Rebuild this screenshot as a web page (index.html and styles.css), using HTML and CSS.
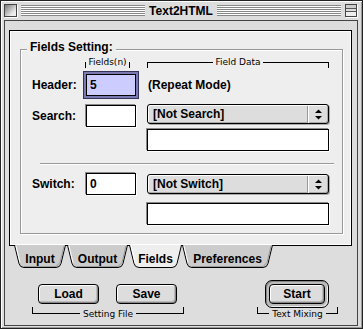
FILE: index.html
```html
<!DOCTYPE html>
<html lang="en">

<head>
  <meta charset="UTF-8">
  <title>Text2HTML</title>
  <link rel="stylesheet" href="styles.css">
</head>

<body>
  <div class="window">
    <div class="titlebar">
      <span class="closebox"></span>
      <span class="stripes"></span>
      <span class="title">Text2HTML</span>
      <span class="stripes"></span>
      <span class="shadebox"></span>
    </div>

    <div class="frame">
      <div class="panel">
        <div class="group">
          <div class="group-title">Fields Setting:</div>

          <div class="captions">
            <span class="cap cap-fields"><span>Fields(n)</span></span>
            <span class="cap cap-data"><span>Field Data</span></span>
          </div>

          <div class="row">
            <label class="lbl" for="header">Header:</label>
            <input class="field focused" id="header" type="text" value="5">
            <span class="note">(Repeat Mode)</span>
          </div>

          <div class="row row-search">
            <label class="lbl" for="search">Search:</label>
            <input class="field" id="search" type="text" value="">
            <div class="data">
              <div class="popup popup-first">
                <span class="popup-text">[Not Search]</span>
                <span class="popup-arrows">
                  <svg width="7" height="11" viewBox="0 0 7 11"><polygon points="0,4 3.5,0.5 7,4" /><polygon points="0,7 3.5,10.5 7,7" /></svg>
                </span>
              </div>
              <div class="wide-field wide-near"></div>
            </div>
          </div>

          <div class="sep"></div>

          <div class="row row-switch">
            <label class="lbl" for="switch">Switch:</label>
            <input class="field" id="switch" type="text" value="0">
            <div class="data">
              <div class="popup popup-second">
                <span class="popup-text">[Not Switch]</span>
                <span class="popup-arrows">
                  <svg width="7" height="11" viewBox="0 0 7 11"><polygon points="0,4 3.5,0.5 7,4" /><polygon points="0,7 3.5,10.5 7,7" /></svg>
                </span>
              </div>
              <div class="wide-field wide-far"></div>
            </div>
          </div>
        </div>
      </div>

      <div class="tabs">
        <svg class="tab" width="52" height="23" viewBox="0 0 52 23">
          <path class="tab-shape" d="M0.5,0 L5,18.5 Q6,22.5 10,22.5 H42 Q46,22.5 47,18.5 L51.5,0" />
          <path class="tab-hi" d="M2,1 L6,17.5" />
          <path class="tab-lo" d="M10,21.5 H42 L46,17.5 L50,1" />
          <text x="26" y="18">Input</text>
        </svg>
        <svg class="tab tab-gap" width="61" height="23" viewBox="0 0 61 23">
          <path class="tab-shape" d="M0.5,0 L5,18.5 Q6,22.5 10,22.5 H51 Q55,22.5 56,18.5 L60.5,0" />
          <path class="tab-hi" d="M2,1 L6,17.5" />
          <path class="tab-lo" d="M10,21.5 H51 L55,17.5 L59,1" />
          <text x="30.5" y="18">Output</text>
        </svg>
        <svg class="tab tab-gap selected" width="53" height="23" viewBox="0 0 53 23">
          <path class="tab-shape" d="M0.5,0 L5,18.5 Q6,22.5 10,22.5 H43 Q47,22.5 48,18.5 L52.5,0" />
          <path class="tab-hi" d="M2,0 L6,17.5" />
          <text x="26.5" y="18">Fields</text>
        </svg>
        <svg class="tab" width="91" height="23" viewBox="0 0 91 23">
          <path class="tab-shape" d="M0.5,0 L5,18.5 Q6,22.5 10,22.5 H81 Q85,22.5 86,18.5 L90.5,0" />
          <path class="tab-hi" d="M2,1 L6,17.5" />
          <path class="tab-lo" d="M10,21.5 H81 L85,17.5 L89,1" />
          <text x="45.5" y="18">Preferences</text>
        </svg>
      </div>

      <div class="bottom">
        <div class="set-group">
          <div class="buttons">
            <button class="btn" type="button">Load</button>
            <button class="btn" type="button">Save</button>
          </div>
          <div class="bracket"><span>Setting File</span></div>
        </div>

        <div class="mix-group">
          <div class="ring">
            <button class="btn btn-start" type="button">Start</button>
          </div>
          <div class="bracket"><span>Text Mixing</span></div>
        </div>
      </div>
    </div>
  </div>
</body>

</html>
```

FILE: styles.css
```css
body {
  margin: 0;
  background: #fff;
  font-family: "Liberation Sans", Arial, sans-serif;
}

.window {
  width: 363px;
  height: 329px;
  box-sizing: border-box;
  border: 1px solid #222;
  background: #ddd;
  box-shadow: inset 1px 1px 0 #fff, inset -1px -1px 0 #999;
  display: flex;
  flex-direction: column;
}

/* title bar */

.titlebar {
  height: 19px;
  flex: none;
  display: flex;
  align-items: center;
  padding: 0 5px 0 3px;
}

.closebox {
  width: 13px;
  height: 13px;
  box-sizing: border-box;
  border: 1px solid #444;
  background: linear-gradient(135deg, #777, #eee 75%);
  box-shadow: 1px 1px 0 #fff;
}

.stripes {
  flex: 1;
  height: 11px;
  margin: 0 4px;
  background: repeating-linear-gradient(to bottom, #888 0 1px, #fff 1px 2px);
}

.title {
  font-weight: bold;
  font-size: 12px;
  line-height: 14px;
  color: #000;
}

.shadebox {
  width: 12px;
  height: 13px;
  box-sizing: border-box;
  border: 1px solid #444;
  background: linear-gradient(to bottom, #ccc 0 3px, #555 3px 4px, #ddd 4px 6px, #555 6px 7px, #eee 7px);
  box-shadow: 1px 1px 0 #fff;
}

/* window body */

.frame {
  flex: 1;
  margin: 0 4px 2px 3px;
  border: 1px solid #444;
  background: #ddd;
  padding: 9px 5px 0 4px;
}

.panel {
  border: 1px solid #000;
  background: #eee;
  box-shadow: inset 1px 1px 0 #fff, inset -1px -1px 0 #fff;
  padding: 18px 8px 11px 10px;
}

.group {
  border: 1px solid #999;
  box-shadow: 1px 1px 0 #fff, inset 1px 1px 0 #fff;
  padding: 0 0 8px 11px;
}

.group-title {
  width: fit-content;
  margin: -10px 0 0 -5px;
  padding: 0 3px;
  background: #eee;
  font-weight: bold;
  font-size: 12px;
  line-height: 14px;
}

.captions {
  display: flex;
  height: 12px;
  margin-top: 2px;
  font-family: "DejaVu Sans", sans-serif;
  font-size: 9px;
  line-height: 12px;
}

.cap {
  display: flex;
  align-items: center;
}

.cap span {
  padding: 0 2px;
}

.cap::before,
.cap::after {
  content: "";
  flex: 1;
  height: 5px;
  margin-top: 6px;
  border-top: 1px solid #000;
}

.cap::before {
  border-left: 1px solid #000;
}

.cap::after {
  border-right: 1px solid #000;
}

.cap-fields {
  width: 45px;
  margin-left: 53px;
}

.cap-data {
  width: 182px;
  margin-left: 17px;
}

.row {
  display: flex;
  align-items: center;
  margin-top: 6px;
}

.row-search,
.row-switch {
  align-items: flex-start;
}

.row-search {
  margin-top: 9px;
}

.row-switch {
  margin-top: 8px;
}

.lbl {
  width: 54px;
  height: 22px;
  line-height: 22px;
  font-weight: bold;
  font-size: 12px;
}

.field {
  width: 50px;
  height: 22px;
  box-sizing: border-box;
  margin: 0;
  padding: 0 3px;
  border: 1px solid #000;
  background: #fff;
  box-shadow: -1px -1px 0 #888, 1px 1px 0 #fff;
  font-family: "Liberation Sans", Arial, sans-serif;
  font-weight: bold;
  font-size: 12px;
  color: #000;
  outline: none;
}

.focused {
  background: #ccccff;
  box-shadow: 0 0 0 2px #7a7ab0, 0 0 0 3px #34345a;
}

.note {
  margin-left: 12px;
  font-weight: bold;
  font-size: 12px;
}

.data {
  width: 182px;
  margin-left: 11px;
}

.popup {
  height: 20px;
  box-sizing: border-box;
  border: 1px solid #000;
  border-radius: 3px;
  background: #ddd;
  box-shadow: inset 1px 1px 0 #fff, inset -1px -1px 0 #aaa, 1px 1px 0 #aaa;
  display: flex;
  align-items: center;
}

.popup-first {
  margin-top: -1px;
}

.popup-second {
  margin-top: 1px;
}

.popup-text {
  flex: 1;
  padding-left: 5px;
  font-weight: bold;
  font-size: 12px;
}

.popup-arrows {
  width: 20px;
  height: 17px;
  border-left: 1px solid #999;
  box-shadow: inset 1px 0 0 #fff;
  display: flex;
  align-items: center;
  justify-content: center;
}

.popup-arrows svg {
  display: block;
  fill: #000;
}

.wide-field {
  height: 22px;
  box-sizing: border-box;
  border: 1px solid #000;
  background: #fff;
  box-shadow: -1px -1px 0 #888, 1px 1px 0 #fff;
}

.wide-near {
  margin-top: 5px;
}

.wide-far {
  margin-top: 9px;
}

.sep {
  margin: 12px 8px 0;
  border-top: 1px solid #999;
  border-bottom: 1px solid #fff;
}

/* tabs */

.tabs {
  display: flex;
  height: 23px;
  margin: -1px 0 0 5px;
}

.tab {
  display: block;
  flex: none;
}

.tab-gap {
  margin-left: 1px;
}

.tab-shape {
  fill: #ccc;
  stroke: #000;
  stroke-width: 1;
}

.selected .tab-shape {
  fill: #eee;
}

.tab-hi {
  fill: none;
  stroke: #fff;
}

.tab-lo {
  fill: none;
  stroke: #999;
}

.tab text {
  font-family: "Liberation Sans", Arial, sans-serif;
  font-weight: bold;
  font-size: 12px;
  text-anchor: middle;
  fill: #000;
}

/* bottom buttons */

.bottom {
  display: flex;
  align-items: flex-start;
  margin: 16px 0 0 23px;
}

.set-group {
  width: 152px;
}

.buttons {
  display: flex;
  gap: 17px;
  padding-left: 6px;
}

.btn {
  width: 61px;
  height: 20px;
  box-sizing: border-box;
  margin: 0;
  padding: 0;
  border: 1px solid #000;
  border-radius: 4px;
  background: #ddd;
  box-shadow: inset 1px 1px 0 #fff, inset -1px -1px 0 #888, inset -2px -2px 0 #bbb;
  font-family: "Liberation Sans", Arial, sans-serif;
  font-weight: bold;
  font-size: 12px;
  color: #000;
}

.bracket {
  display: flex;
  align-items: center;
  height: 14px;
  margin-top: 3px;
  font-family: "DejaVu Sans", sans-serif;
  font-size: 9px;
  line-height: 14px;
}

.bracket span {
  padding: 0 3px;
}

.bracket::before,
.bracket::after {
  content: "";
  flex: 1;
  height: 6px;
  margin-bottom: 7px;
  border-bottom: 1px solid #000;
}

.bracket::before {
  border-left: 1px solid #000;
}

.bracket::after {
  border-right: 1px solid #000;
}

.mix-group {
  width: 81px;
  margin: -4px 0 0 73px;
}

.ring {
  width: fit-content;
  margin-left: 8px;
  padding: 3px;
  border: 1px solid #000;
  border-radius: 7px;
  background: #bbb;
  box-shadow: inset 1px 1px 0 #888, inset -1px -1px 0 #eee;
}

.btn-start {
  width: 56px;
}

.mix-group .bracket {
  margin-top: -1px;
}
```
